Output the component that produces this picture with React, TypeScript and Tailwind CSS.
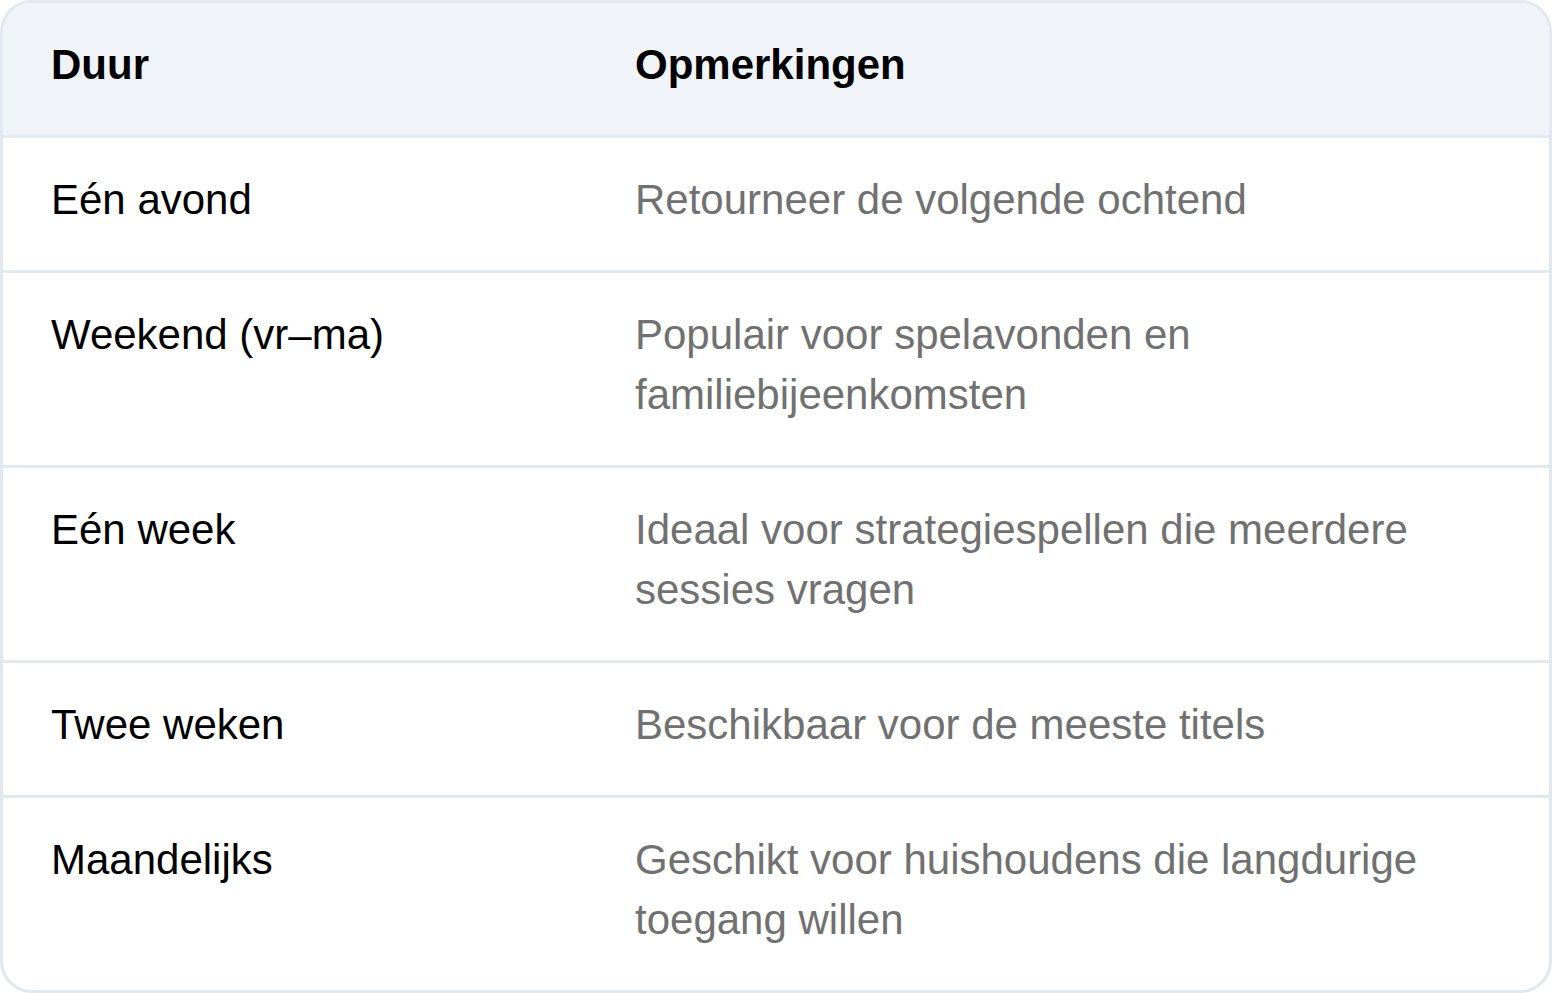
import React from "react";

const rows: { d: string; o: string }[] = [
  { d: "Eén avond", o: "Retourneer de volgende ochtend" },
  { d: "Weekend (vr–ma)", o: "Populair voor spelavonden en familiebijeenkomsten" },
  { d: "Eén week", o: "Ideaal voor strategiespellen die meerdere sessies vragen" },
  { d: "Twee weken", o: "Beschikbaar voor de meeste titels" },
  { d: "Maandelijks", o: "Geschikt voor huishoudens die langdurige toegang willen" },
];

export default function App() {
  return (
    <div className="w-[1554px] bg-white">
      <div
        className="w-[1552px] rounded-[32px] border-[3px] border-[#e2e8f0] overflow-hidden text-[42px] leading-[60px]"
        style={{ fontFamily: '"Liberation Sans", Arial, sans-serif' }}
      >
        <div className="grid grid-cols-[584px_1fr] bg-[#f0f4f8] border-b-[3px] border-[#e2e8f0] font-bold text-black">
          <div className="pl-[48px] pr-[46px] pt-[32px] pb-[40px]">Duur</div>
          <div className="pl-[48px] pr-[46px] pt-[32px] pb-[40px]">Opmerkingen</div>
        </div>
        {rows.map((r, i) => (
          <div
            key={i}
            className={
              i < rows.length - 1
                ? "grid grid-cols-[584px_1fr] border-b-[3px] border-[#e2e8f0]"
                : "grid grid-cols-[584px_1fr]"
            }
          >
            <div className="pl-[48px] pr-[46px] pt-[32px] pb-[40px] text-black">{r.d}</div>
            <div className="pl-[48px] pr-[46px] pt-[32px] pb-[40px] text-[#717171]">{r.o}</div>
          </div>
        ))}
      </div>
    </div>
  );
}
